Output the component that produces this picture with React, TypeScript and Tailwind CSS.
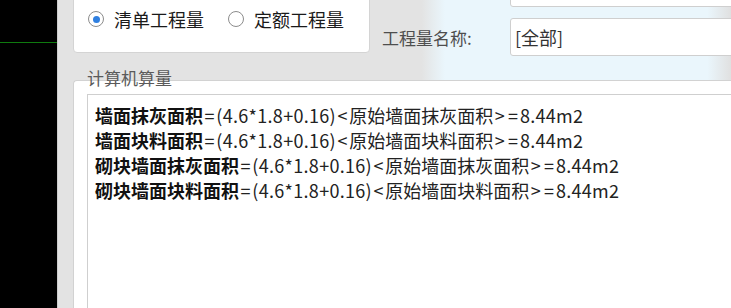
import React from "react";

const FONT = { fontFamily: '"Noto Sans CJK SC", "Noto Sans", sans-serif' };

const LINES = [
  { name: "墙面抹灰面积", ref: "原始墙面抹灰面积" },
  { name: "墙面块料面积", ref: "原始墙面块料面积" },
  { name: "砌块墙面抹灰面积", ref: "原始墙面抹灰面积" },
  { name: "砌块墙面块料面积", ref: "原始墙面块料面积" },
];

function Radio({ checked, label }: { checked?: boolean; label: string }) {
  return (
    <div className="flex items-center gap-[10px]">
      <div className="w-4 h-4 rounded-full border-[1.5px] border-[#8c8c8c] bg-white flex items-center justify-center">
        {checked && <div className="w-[7px] h-[7px] rounded-full bg-[#2f7fe0]"></div>}
      </div>
      <span className="text-[18px] leading-[24px] text-[#1a1a1a]">{label}</span>
    </div>
  );
}

export default function App() {
  return (
    <div className="w-[731px] h-[308px] flex overflow-hidden bg-[#e3e3e3]" style={FONT}>
      {/* left canvas strip */}
      <div className="w-[57px] shrink-0 bg-black">
        <div className="mt-[42px] h-px bg-[#0f7a0f]"></div>
      </div>

      <div className="flex-1 flex flex-col border-l border-[#cdcdcd] min-w-0">
        {/* top settings */}
        <div className="h-[80px] shrink-0 flex bg-[linear-gradient(to_right,#e3e3e3_0%,#e3e3e3_54%,#eaf6fc_57.5%,#eaf6fc_96.5%,#e0e0e0_100%)]">
          <div className="ml-[15px] mt-[-10px] w-[297px] h-[63px] bg-white border border-[#d4d4d4] rounded-[4px] flex items-end pb-[21px] pl-[14px] gap-[24px]">
            <Radio checked label="清单工程量" />
            <Radio label="定额工程量" />
          </div>
          <div className="w-[140px] shrink-0 pl-[12px] pt-[26px] text-[17px] leading-[24px] text-[#4e4e4e]">
            工程量名称:
          </div>
          <div className="flex-1 flex flex-col gap-[11px] mr-[-8px]">
            <div className="mt-[-20px] h-[27px] bg-white border border-[#cfcfcf] rounded-[3px]"></div>
            <div className="h-[38px] bg-white border border-[#cfcfcf] rounded-[3px] flex items-center pl-[4px] text-[18px] text-[#333]">
              [全部]
            </div>
          </div>
        </div>

        {/* 计算机算量 group */}
        <div className="relative flex-1 ml-[15px] mr-[-8px] bg-white border-l border-t border-[#d2d2d2] rounded-tl-[4px] pl-[13px] pt-[13px] flex">
          <span className="absolute left-[13px] top-[-14px] text-[17px] leading-[22px] text-[#5a5a5a]">计算机算量</span>
          <div className="flex-1 border-l border-t border-[#cfcfcf] pl-[7px] pt-[8px]">
            {LINES.map((l) => (
              <div key={l.name} className="text-[18px] leading-[25px] text-[#222] whitespace-nowrap tracking-[0.3px]">
                <span className="font-bold text-[#111] tracking-normal">{l.name}</span>
                <span className="px-[1.5px]">=</span>(4.6*1.8+0.16)<span className="px-[1.5px]">&lt;</span>
                <span className="tracking-normal">{l.ref}</span>
                <span className="px-[1.5px]">&gt;</span><span className="px-[1.5px]">=</span>8.44m2
              </div>
            ))}
          </div>
        </div>
      </div>
    </div>
  );
}
